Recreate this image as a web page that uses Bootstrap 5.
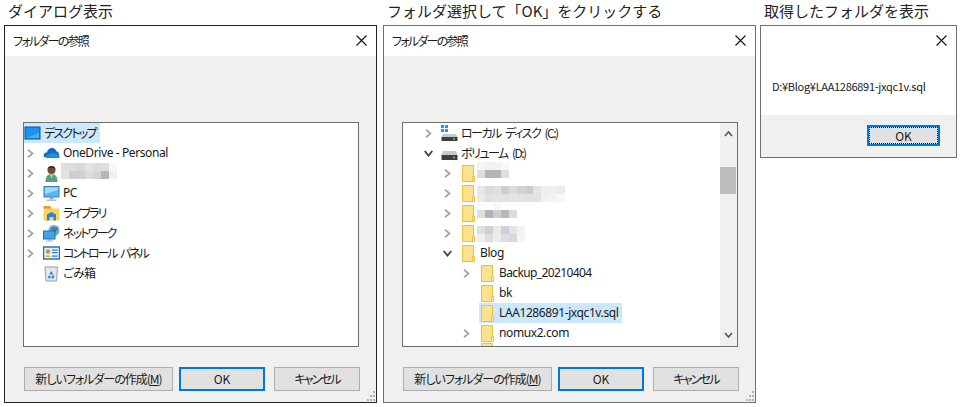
<!DOCTYPE html>
<html lang="ja">
<head>
<meta charset="utf-8">
<title>フォルダーの参照</title>
<link href="https://cdn.jsdelivr.net/npm/bootstrap@5.3.0/dist/css/bootstrap.min.css" rel="stylesheet">
<style>
html,body{background:#fff;margin:0;height:407px;overflow:hidden}
body{font-family:"Noto Sans CJK JP","Noto Sans",sans-serif;color:#1a1a1a}
.sheet{padding-left:4px;width:961px;height:407px}
.pane-a{width:373px;margin-right:6px}
.pane-b{width:373px;margin-right:4px}
.pane-c{width:197px}
.cap{height:25px;font-size:15px;line-height:22px;padding-left:4px;white-space:nowrap;color:#222;font-family:"Noto Sans CJK JP",sans-serif}
.win{position:relative;background:#f0f0f0;height:378px;border:1px solid #6f6f6f;font-size:12px;font-feature-settings:"palt"}
.win-dark{border-color:#222}
.win-short{height:133px}
.win-top{height:30px;background:#fff;padding-left:8px;line-height:29px;font-size:12px;letter-spacing:-1.75px}
.closer{position:absolute;right:9px;top:9px;width:11px;height:11px}
.treebox{margin:66px 0 0 18px;width:336px;height:225px;background:#fff;border:1px solid #6f6f6f;overflow:hidden;position:relative}
.treebody{height:100%;flex:1 1 auto;overflow:hidden;min-width:0}
.trow{height:20px;line-height:18px;font-size:12px;white-space:nowrap}
.sel{background:#cce8ff}
.chev{width:9px;height:9px;flex:none}
.slot{width:19px;flex:none;padding-left:2px}
.lvl2{padding-left:19px}
.lvl3{padding-left:38px}
.lvl4{padding-left:57px}
.ico{width:17px;height:17px;flex:none;display:block}
.lbl{padding:0 4px 1px 3px}
.kn{letter-spacing:-1.8px}
.kn-w{letter-spacing:-2.1px;word-spacing:3px}
.kn-s{letter-spacing:-1.5px;word-spacing:3px}
.kj{letter-spacing:-.6px}
.lat{font-family:"Noto Sans",sans-serif;letter-spacing:-.4px}
.lat-t{font-family:"Noto Sans",sans-serif;letter-spacing:-.62px}
.mosaic{display:block;flex:none;align-self:flex-start}
.m-a{margin:0 0 0 1px}
.m-b{margin-top:-1px}
.m-c{margin-top:3px}
.rail{width:17px;background:#f0f0f0;position:relative;flex:none}
.thumb{position:absolute;left:0;right:1px;top:44px;height:27px;background:#bdbdbd}
.railup{position:absolute;left:4px;top:7px}
.raildn{position:absolute;left:4px;bottom:7px}
.foot{margin:20px 0 0 19px}
.wbtn{height:24px;background:#e1e1e1;border:1px solid #adadad;border-radius:0;color:#1a1a1a;font-size:12px;line-height:20px;padding:0;text-align:center;white-space:nowrap;font-feature-settings:"palt"}
.wbtn:hover{background:#e1e1e1;color:#1a1a1a;border-color:#adadad}
.wbtn-new{width:149px;margin-right:6px;letter-spacing:-1px}
.wbtn-ok{width:86px;margin-right:9px;border:2px solid #0078d7}
.wbtn-ok:hover{border-color:#0078d7}
.wbtn-cancel{width:86px;letter-spacing:-1.8px}
.grip{position:absolute;right:1px;bottom:1px;width:10px;height:10px}
.msg-top{height:89px;background:#fff;position:relative}
.msg-txt{padding:53px 0 0 11px;font-size:11px;line-height:14px;white-space:nowrap;letter-spacing:-.3px}
.msg-foot{padding:10px 0 0 106px}
.wbtn-dot{width:73px;height:21px;border:2px solid #0078d7;background:#e1e1e1;position:relative;line-height:17px;padding:0}
.wbtn-dot:hover{border-color:#0078d7}
.wbtn-dot::after{content:"";position:absolute;inset:0;border:1px dotted #000}
</style>
</head>
<body>
<svg width="0" height="0" class="d-none">
  <defs>
    <symbol id="i-r" viewBox="0 0 9 9"><path d="M2 .7 L6.500 4.500 L2 8.300" fill="none" stroke="#a6a6a6" stroke-width="1.800"/></symbol>
    <symbol id="i-d" viewBox="0 0 9 9"><path d="M.7 2 L4.500 6.500 L8.300 2" fill="none" stroke="#404040" stroke-width="1.800"/></symbol>
    <symbol id="i-desk" viewBox="0 0 17 17"><rect x="1" y="2" width="15" height="12" fill="#1e90f0" stroke="#0f4f8f"/><path d="M2 13 H15 V8 Z" fill="#3fb1f5"/></symbol>
    <symbol id="i-cloud" viewBox="0 0 17 17"><path d="M1 12 C0 9 2 7 4 7.500 C4.500 4 7 2.500 10 3 C12 3.500 13 5 13.500 6.500 C15.500 6.500 16.800 9 16 12 Z" fill="#0f6cc4"/><path d="M2.500 13 C2.500 10 5 8.500 7 9 C8 7.500 11 7.500 12.500 8.800 C14.500 8.800 17 10 16.500 13 Z" fill="#1a90e0"/></symbol>
    <symbol id="i-user" viewBox="0 0 17 17"><circle cx="8.500" cy="5" r="4" fill="#7a4a30"/><path d="M4.500 4.500 C4.500 0 12.500 0 12.500 4.500 L11 3 H6 Z" fill="#2c2a28"/><path d="M2.500 17 C2.500 11 5 9 8.500 9 C12 9 14.500 11 14.500 17 Z" fill="#5d9e7c"/><path d="M7.500 9.500 H9.500 L8.500 13 Z" fill="#eee"/></symbol>
    <symbol id="i-pc" viewBox="0 0 17 17"><rect x="1" y="1.500" width="15" height="10.500" fill="#58b9f2" stroke="#3f7eae"/><path d="M2 2.500 H15 V5 L2 9 Z" fill="#9ddcf9"/><rect x="6.500" y="12.500" width="4" height="2" fill="#9aa7b0"/><rect x="3.500" y="14.500" width="10" height="1.500" fill="#b5bec5"/></symbol>
    <symbol id="i-lib" viewBox="0 0 17 17"><path d="M.5 1 H7 L9 3.500 H16.500 V15.500 H.5 Z" fill="#fcd165"/><path d="M.5 1 H7 L8.500 3.500 H.5 Z" fill="#e0a21e"/><path d="M4 15.500 V9.500 L8.500 7 L13 9.500 V15.500 H10.500 V12 H6.500 V15.500 Z" fill="#2a86d6"/></symbol>
    <symbol id="i-net" viewBox="0 0 17 17"><circle cx="11" cy="5.500" r="5.500" fill="#6fa7cf"/><path d="M8 1.500 C10 3 12 1.500 15 3 L13 7 L9 8 Z" fill="#3f7fa8"/><rect x=".5" y="6" width="11.500" height="8" fill="#3fa5e8" stroke="#2b6f9f"/><rect x="5" y="14" width="3" height="1.500" fill="#8aa"/><rect x="3" y="15.500" width="7" height="1" fill="#a9b5bd"/></symbol>
    <symbol id="i-cp" viewBox="0 0 17 17"><rect x=".5" y="2" width="16" height="12" fill="#dff1fb" stroke="#1b6fb0" stroke-width="1.400"/><circle cx="5" cy="6.500" r="2.200" fill="#e98a22"/><rect x="9" y="4.500" width="5.500" height="1.200" fill="#2a7dbd"/><rect x="9" y="7" width="5.500" height="1.200" fill="#2a7dbd"/><rect x="2.500" y="10.500" width="5" height="1.500" fill="#e9b022"/><rect x="9" y="10.500" width="5.500" height="1.200" fill="#2a7dbd"/></symbol>
    <symbol id="i-bin" viewBox="0 0 17 17"><path d="M2 2 H14.500 L13.500 16 H3 Z" fill="#e3e7ea" stroke="#9aa0a5"/><path d="M8.200 6 L10.500 9.500 H6 Z" fill="#2f86cf"/><path d="M5 11 H8 L7 13.500 H5.500 Z M9 10.500 H11.500 L10.500 13.500 H8.500 Z" fill="#2f86cf"/></symbol>
    <symbol id="i-cdisk" viewBox="0 0 17 17"><rect x="0" y="0" width="3" height="3" fill="#0aa3f2"/><rect x="4" y="0" width="3" height="3" fill="#0aa3f2"/><rect x="0" y="4" width="3" height="3" fill="#0aa3f2"/><rect x="4" y="4" width="3" height="3" fill="#0aa3f2"/><path d="M2 9 H15 L16.500 12 H.5 Z" fill="#c5c9cc"/><rect x=".5" y="12" width="16" height="4" fill="#3d3f42"/><rect x="12" y="13.300" width="2" height="1.400" fill="#5fe04a"/></symbol>
    <symbol id="i-disk" viewBox="0 0 17 17"><path d="M2 6 H15 L16.500 10 H.5 Z" fill="#c5c9cc"/><rect x=".5" y="10" width="16" height="5" fill="#3d3f42"/><rect x="12" y="11.800" width="2" height="1.400" fill="#5fe04a"/></symbol>
    <symbol id="i-fold" viewBox="0 0 17 17"><path d="M2.500 .5 H13.500 V16.500 H2.500 Z" fill="#fde28e" stroke="#e8bf45"/><path d="M12.500 11.500 H14.500 V16.500 H12.500 Z" fill="#fff3c8" stroke="#e8bf45"/></symbol>
    <symbol id="i-x" viewBox="0 0 11 11"><path d="M.5 .5 L10.500 10.500 M10.500 .5 L.5 10.500" stroke="#111" stroke-width="1.100" fill="none"/></symbol>
    <symbol id="i-grip" viewBox="0 0 10 10"><path d="M8 0h2v2H8zM5 4h2v2H5zM8 4h2v2H8zM2 8h2v2H2zM5 8h2v2H5zM8 8h2v2H8z" fill="#b0b0b0"/></symbol>
  </defs>
</svg>

<main class="sheet d-flex align-items-start">

  <section class="pane-a">
    <div class="cap">ダイアログ表示</div>
    <div class="win win-dark">
      <div class="win-top">フォルダーの参照</div>
      <svg class="closer"><use href="#i-x"/></svg>
      <div class="treebox">
        <div class="d-flex"><div class="trow sel d-inline-flex align-items-center"><svg class="ico"><use href="#i-desk"/></svg><span class="lbl kn">デスクトップ</span></div></div>
        <div class="trow d-flex align-items-center"><span class="slot"><svg class="chev d-block"><use href="#i-r"/></svg></span><svg class="ico"><use href="#i-cloud"/></svg><span class="lbl lat">OneDrive - Personal</span></div>
        <div class="trow d-flex align-items-center"><span class="slot"><svg class="chev d-block"><use href="#i-r"/></svg></span><svg class="ico"><use href="#i-user"/></svg>
          <svg class="mosaic m-a" width="56" height="16"><g shape-rendering="crispEdges"><rect width="8" height="8" fill="#e2dedb"/><rect x="8" width="8" height="8" fill="#dcdde0"/><rect x="16" width="8" height="8" fill="#d6d8dc"/><rect x="24" width="8" height="8" fill="#e2e2e3"/><rect x="32" width="8" height="8" fill="#dadadf"/><rect x="40" width="8" height="8" fill="#dedede"/><rect x="48" width="8" height="8" fill="#f6f7f7"/><rect y="8" width="8" height="8" fill="#e6e2df"/><rect x="8" y="8" width="8" height="8" fill="#cfcfd1"/><rect x="16" y="8" width="8" height="8" fill="#cfcfcb"/><rect x="24" y="8" width="8" height="8" fill="#dcdcdc"/><rect x="32" y="8" width="8" height="8" fill="#d3d3d3"/><rect x="40" y="8" width="8" height="8" fill="#b7b7b3"/><rect x="48" y="8" width="8" height="8" fill="#eff1f1"/></g></svg></div>
        <div class="trow d-flex align-items-center"><span class="slot"><svg class="chev d-block"><use href="#i-r"/></svg></span><svg class="ico"><use href="#i-pc"/></svg><span class="lbl lat">PC</span></div>
        <div class="trow d-flex align-items-center"><span class="slot"><svg class="chev d-block"><use href="#i-r"/></svg></span><svg class="ico"><use href="#i-lib"/></svg><span class="lbl kn">ライブラリ</span></div>
        <div class="trow d-flex align-items-center"><span class="slot"><svg class="chev d-block"><use href="#i-r"/></svg></span><svg class="ico"><use href="#i-net"/></svg><span class="lbl kn">ネットワーク</span></div>
        <div class="trow d-flex align-items-center"><span class="slot"><svg class="chev d-block"><use href="#i-r"/></svg></span><svg class="ico"><use href="#i-cp"/></svg><span class="lbl kn-w">コントロール パネル</span></div>
        <div class="trow d-flex align-items-center"><span class="slot"></span><svg class="ico"><use href="#i-bin"/></svg><span class="lbl kj">ごみ箱</span></div>
      </div>
      <div class="foot d-flex">
        <button type="button" class="btn wbtn wbtn-new">新しいフォルダーの作成(<u>M</u>)</button>
        <button type="button" class="btn wbtn wbtn-ok">OK</button>
        <button type="button" class="btn wbtn wbtn-cancel">キャンセル</button>
      </div>
      <svg class="grip"><use href="#i-grip"/></svg>
    </div>
  </section>

  <section class="pane-b">
    <div class="cap">フォルダ選択して「OK」をクリックする</div>
    <div class="win">
      <div class="win-top">フォルダーの参照</div>
      <svg class="closer"><use href="#i-x"/></svg>
      <div class="treebox d-flex">
        <div class="treebody">
          <div class="trow d-flex align-items-center lvl2"><span class="slot"><svg class="chev d-block"><use href="#i-r"/></svg></span><svg class="ico"><use href="#i-cdisk"/></svg><span class="lbl kn-s">ローカル ディスク (C:)</span></div>
          <div class="trow d-flex align-items-center lvl2"><span class="slot"><svg class="chev d-block"><use href="#i-d"/></svg></span><svg class="ico"><use href="#i-disk"/></svg><span class="lbl kn-s">ボリューム (D:)</span></div>
          <div class="trow d-flex align-items-center lvl3"><span class="slot"><svg class="chev d-block"><use href="#i-r"/></svg></span><svg class="ico"><use href="#i-fold"/></svg>
            <svg class="mosaic m-b" width="32" height="16"><g shape-rendering="crispEdges"><rect width="8" height="8" fill="#f7f5f4"/><rect x="8" width="16" height="8" fill="#f2f2f3"/><rect x="24" width="8" height="8" fill="#f7f8fc"/><rect y="8" width="8" height="8" fill="#dddddd"/><rect x="8" y="8" width="16" height="8" fill="#b5b5b5"/><rect x="24" y="8" width="8" height="8" fill="#dcdede"/></g></svg></div>
          <div class="trow d-flex align-items-center lvl3"><span class="slot"><svg class="chev d-block"><use href="#i-r"/></svg></span><svg class="ico"><use href="#i-fold"/></svg>
            <svg class="mosaic m-c" width="88" height="16"><g shape-rendering="crispEdges"><rect width="8" height="8" fill="#e7e7e5"/><rect x="8" width="8" height="8" fill="#d9dadc"/><rect x="16" width="8" height="8" fill="#e0dede"/><rect x="24" width="8" height="8" fill="#cfcdd3"/><rect x="32" width="8" height="8" fill="#dbdbe0"/><rect x="40" width="8" height="8" fill="#d6d2cf"/><rect x="48" width="8" height="8" fill="#cbcbd0"/><rect x="56" width="8" height="8" fill="#e2e3e6"/><rect x="64" width="8" height="8" fill="#eeeeee"/><rect x="72" width="8" height="8" fill="#efefef"/><rect x="80" width="8" height="8" fill="#e9ecee"/><rect y="8" width="8" height="8" fill="#e9e9e8"/><rect x="8" y="8" width="8" height="8" fill="#e2e0e1"/><rect x="16" y="8" width="8" height="8" fill="#e4e3e4"/><rect x="24" y="8" width="8" height="8" fill="#e3e1e3"/><rect x="32" y="8" width="8" height="8" fill="#e4e5e8"/><rect x="40" y="8" width="8" height="8" fill="#e5e2e1"/><rect x="48" y="8" width="8" height="8" fill="#e0e1e1"/><rect x="56" y="8" width="8" height="8" fill="#e1e2e2"/><rect x="64" y="8" width="8" height="8" fill="#f0f0f0"/><rect x="72" y="8" width="8" height="8" fill="#f4f4f4"/><rect x="80" y="8" width="8" height="8" fill="#f7f8f8"/></g></svg></div>
          <div class="trow d-flex align-items-center lvl3"><span class="slot"><svg class="chev d-block"><use href="#i-r"/></svg></span><svg class="ico"><use href="#i-fold"/></svg>
            <svg class="mosaic m-b" width="40" height="16"><g shape-rendering="crispEdges"><rect x="16" width="8" height="8" fill="#f7f7f8"/><rect y="8" width="8" height="8" fill="#dfe0da"/><rect x="8" y="8" width="8" height="8" fill="#b5b0ba"/><rect x="16" y="8" width="8" height="8" fill="#cdccd1"/><rect x="24" y="8" width="8" height="8" fill="#b8b8b6"/><rect x="32" y="8" width="8" height="8" fill="#d7dcdf"/></g></svg></div>
          <div class="trow d-flex align-items-center lvl3"><span class="slot"><svg class="chev d-block"><use href="#i-r"/></svg></span><svg class="ico"><use href="#i-fold"/></svg>
            <svg class="mosaic m-c" width="48" height="16"><g shape-rendering="crispEdges"><rect width="8" height="8" fill="#e2dfdf"/><rect x="8" width="8" height="8" fill="#cfd0d1"/><rect x="16" width="8" height="8" fill="#e8ece4"/><rect x="24" width="8" height="8" fill="#d0cedb"/><rect x="32" width="8" height="8" fill="#e6e4e6"/><rect x="40" width="8" height="8" fill="#f1f2f3"/><rect y="8" width="8" height="8" fill="#f0efef"/><rect x="8" y="8" width="8" height="8" fill="#dedfdd"/><rect x="16" y="8" width="8" height="8" fill="#eaeef0"/><rect x="24" y="8" width="8" height="8" fill="#e0dde2"/><rect x="32" y="8" width="8" height="8" fill="#d9d7db"/><rect x="40" y="8" width="8" height="8" fill="#f3f4f5"/></g></svg></div>
          <div class="trow d-flex align-items-center lvl3"><span class="slot"><svg class="chev d-block"><use href="#i-d"/></svg></span><svg class="ico"><use href="#i-fold"/></svg><span class="lbl lat">Blog</span></div>
          <div class="trow d-flex align-items-center lvl4"><span class="slot"><svg class="chev d-block"><use href="#i-r"/></svg></span><svg class="ico"><use href="#i-fold"/></svg><span class="lbl lat-t">Backup_20210404</span></div>
          <div class="trow d-flex align-items-center lvl4"><span class="slot"></span><svg class="ico"><use href="#i-fold"/></svg><span class="lbl lat">bk</span></div>
          <div class="trow d-flex align-items-center lvl4"><span class="slot"></span><span class="sel d-inline-flex align-items-center h-100"><svg class="ico"><use href="#i-fold"/></svg><span class="lbl lat">LAA1286891-jxqc1v.sql</span></span></div>
          <div class="trow d-flex align-items-center lvl4"><span class="slot"><svg class="chev d-block"><use href="#i-r"/></svg></span><svg class="ico"><use href="#i-fold"/></svg><span class="lbl lat">nomux2.com</span></div>
          <div class="trow d-flex align-items-start lvl4"><span class="slot"></span><svg class="ico"><use href="#i-fold"/></svg></div>
        </div>
        <div class="rail">
          <svg class="railup" width="9" height="7"><path d="M1 6 L4.500 2 L8 6" fill="none" stroke="#555" stroke-width="1.600"/></svg>
          <div class="thumb"></div>
          <svg class="raildn" width="9" height="7"><path d="M1 1 L4.500 5 L8 1" fill="none" stroke="#555" stroke-width="1.600"/></svg>
        </div>
      </div>
      <div class="foot d-flex">
        <button type="button" class="btn wbtn wbtn-new">新しいフォルダーの作成(<u>M</u>)</button>
        <button type="button" class="btn wbtn wbtn-ok">OK</button>
        <button type="button" class="btn wbtn wbtn-cancel">キャンセル</button>
      </div>
      <svg class="grip"><use href="#i-grip"/></svg>
    </div>
  </section>

  <section class="pane-c">
    <div class="cap">取得したフォルダを表示</div>
    <div class="win win-short">
      <div class="msg-top">
        <svg class="closer"><use href="#i-x"/></svg>
        <div class="msg-txt">D:¥Blog¥LAA1286891-jxqc1v.sql</div>
      </div>
      <div class="msg-foot"><button type="button" class="btn wbtn wbtn-dot">OK</button></div>
    </div>
  </section>

</main>
<script src="https://cdn.jsdelivr.net/npm/bootstrap@5.3.0/dist/js/bootstrap.bundle.min.js"></script>
</body>
</html>
